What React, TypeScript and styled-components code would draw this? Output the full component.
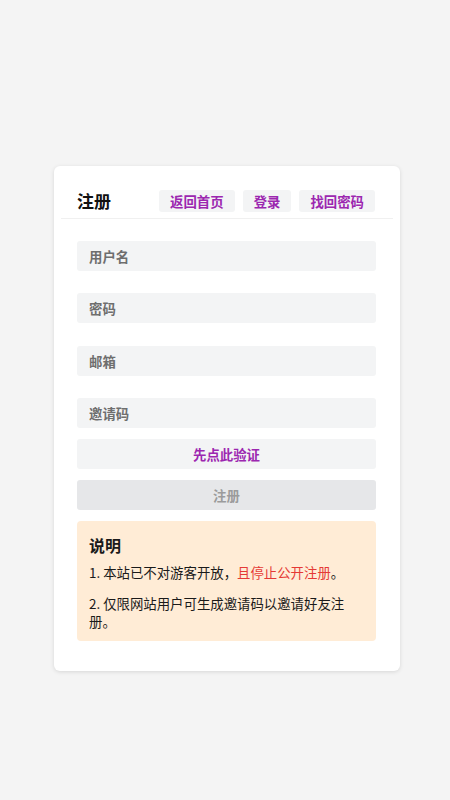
import styled, { createGlobalStyle } from "styled-components";

const GlobalStyle = createGlobalStyle`
  html, body {
    margin: 0;
    padding: 0;
    background: #f4f4f4;
    font-family: "Noto Sans CJK SC", "Noto Sans", sans-serif;
  }
  * { box-sizing: border-box; }
`;

const Page = styled.div`
  display: flex;
  justify-content: center;
  align-items: flex-start;
  padding: 166px 0 0 4px;
  min-height: 800px;
`;

const Card = styled.div`
  width: 346px;
  background: #fff;
  border-radius: 6px;
  box-shadow: 0 1px 4px rgba(0, 0, 0, 0.12);
  padding-bottom: 30px;
`;

const Header = styled.div`
  display: flex;
  align-items: center;
  margin: 0 7px;
  padding: 24px 18px 6px 16px;
  border-bottom: 1px solid #f0f0f0;
`;

const Title = styled.h2`
  flex: 1;
  margin: 0;
  font-size: 17px;
  font-weight: 700;
  color: #111;
  line-height: 22px;
`;

const NavButton = styled.button`
  height: 22px;
  padding: 0 11px;
  margin-left: 8px;
  border: none;
  border-radius: 3px;
  background: #f3f4f5;
  color: #9c27b0;
  font-family: inherit;
  font-size: 13.4px;
  font-weight: 700;
  line-height: 22px;
  cursor: pointer;
`;

const Form = styled.form`
  display: flex;
  flex-direction: column;
  padding: 22px 24px 0 23px;
`;

const Field = styled.input<{ $gap?: number }>`
  height: 30px;
  margin-bottom: ${(p) => p.$gap ?? 22.4}px;
  padding: 0 12px;
  border: none;
  border-radius: 3px;
  background: #f3f4f5;
  font-family: inherit;
  font-size: 13.4px;
  outline: none;
  &::placeholder {
    color: #6e6e6e;
    font-weight: 600;
  }
`;

const ActionButton = styled.button<{ $disabled?: boolean }>`
  height: 30px;
  margin-bottom: 11px;
  border: none;
  border-radius: 3px;
  background: ${(p) => (p.$disabled ? "#e6e7e9" : "#f3f4f5")};
  color: ${(p) => (p.$disabled ? "#9b9b9b" : "#9c27b0")};
  font-family: inherit;
  font-size: 13.4px;
  font-weight: 700;
  cursor: pointer;
`;

const Notice = styled.div`
  background: #ffecd6;
  border-radius: 4px;
  padding: 12px 24px 10px 12px;
  color: #1a1a1a;
`;

const NoticeTitle = styled.h3`
  margin: 0 0 6px;
  font-size: 16px;
  font-weight: 700;
  line-height: 24px;
`;

const NoticeLine = styled.p`
  margin: 0 0 12px;
  font-size: 13.4px;
  line-height: 18.5px;
  &:last-child { margin-bottom: 0; }
`;

const Red = styled.span`
  color: #e53935;
`;

export default function App() {
  return (
    <>
      <GlobalStyle />
      <Page>
        <Card>
          <Header>
            <Title>注册</Title>
            <NavButton>返回首页</NavButton>
            <NavButton>登录</NavButton>
            <NavButton>找回密码</NavButton>
          </Header>
          <Form onSubmit={(e) => e.preventDefault()}>
            <Field placeholder="用户名" />
            <Field placeholder="密码" type="password" />
            <Field placeholder="邮箱" />
            <Field placeholder="邀请码" $gap={11} />
            <ActionButton type="button">先点此验证</ActionButton>
            <ActionButton type="submit" $disabled>注册</ActionButton>
            <Notice>
              <NoticeTitle>说明</NoticeTitle>
              <NoticeLine>
                1. 本站已不对游客开放，<Red>且停止公开注册</Red>。
              </NoticeLine>
              <NoticeLine>2. 仅限网站用户可生成邀请码以邀请好友注册。</NoticeLine>
            </Notice>
          </Form>
        </Card>
      </Page>
    </>
  );
}
